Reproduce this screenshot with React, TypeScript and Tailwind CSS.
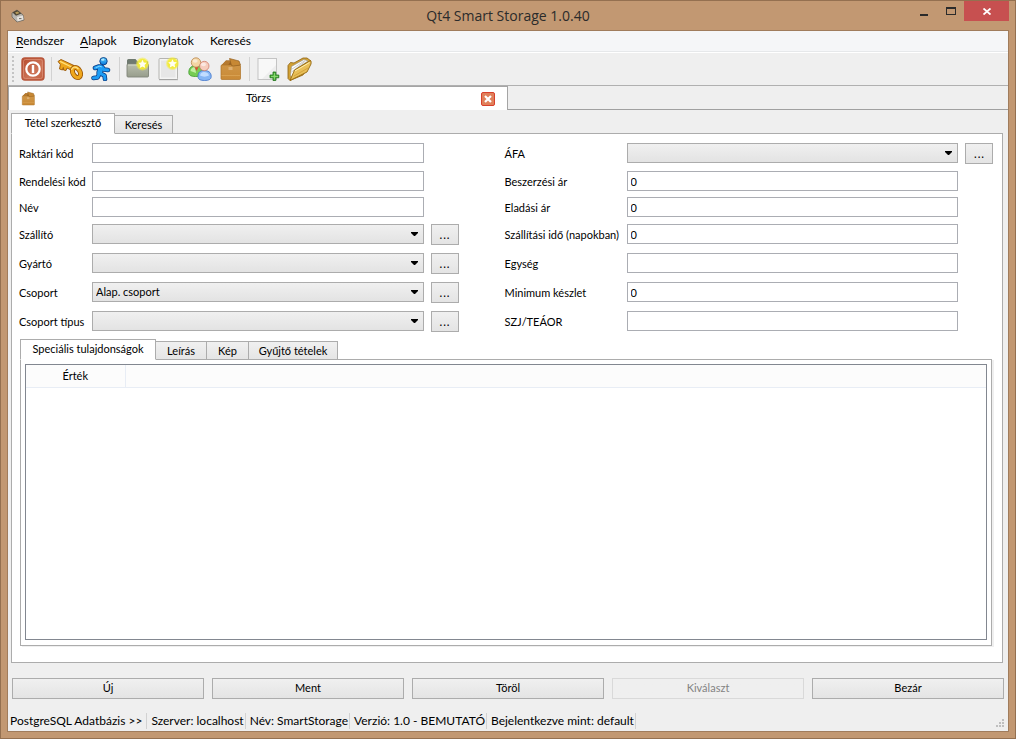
import React, { useState } from "react";

const menuItems = [
  { label: "Rendszer", underline: true },
  { label: "Alapok", underline: true },
  { label: "Bizonylatok", underline: false },
  { label: "Keresés", underline: false },
];

const statusItems = [
  "PostgreSQL Adatbázis >>",
  "Szerver: localhost",
  "Név: SmartStorage",
  "Verzió: 1.0 - BEMUTATÓ",
  "Bejelentkezve mint: default",
];

const AppIcon = () => (
  <svg width="14" height="14" viewBox="0 0 14 14">
    <path d="M1 4 L6 1 L12 6 L13 11 L6 13 L1 8Z" fill="#b9b6b0" stroke="#6b6760" strokeWidth="0.8" />
    <path d="M1.500 3.500 L6 1 L10.500 4.500 L5 6.800Z" fill="#4f4636" />
    <path d="M4 3.500 L6.5 2.5 L8.5 4 L5.5 5.3Z" fill="#b59a5a" />
    <path d="M6 8 L12 6.5 L12.5 10.5 L6.5 12.5Z" fill="#e4e2de" />
    <path d="M8 9.6h2.5" stroke="#6b6760" />
  </svg>
);

const PowerIcon = () => (
  <svg width="24" height="24" viewBox="0 0 24 24">
    <defs>
      <linearGradient id="power" x1="0" y1="0" x2="1" y2="1">
        <stop offset="0" stopColor="#b64a2d" />
        <stop offset="0.6" stopColor="#cd7457" />
        <stop offset="1" stopColor="#c05e40" />
      </linearGradient>
    </defs>
    <rect x="1" y="1" width="22" height="22" rx="3" fill="url(#power)" stroke="#b8553a" strokeWidth="1.4" />
    <rect x="2.5" y="2.5" width="19" height="19" rx="2" fill="none" stroke="#d98d73" strokeWidth="0.8" />
    <circle cx="12" cy="12" r="6.700" fill="none" stroke="#fff" strokeWidth="2.200" />
    <path d="M12 8v8" stroke="#fff" strokeWidth="2.4" />
  </svg>
);

const KeyIcon = () => (
  <svg width="26" height="24" viewBox="0 0 26 24">
    <path
      d="M1 4.500 L4 2.500 L17 8.500 L15 13.500 L10 11 L9 13.500 L6.500 13 L6.300 10.500 L5.500 13 L2.500 12 L3.400 7.500Z"
      fill="#eda51c"
      stroke="#9a5708"
      strokeWidth="0.9"
    />
    <path d="M3 4.300 L15.500 10.500" stroke="#ffe07a" strokeWidth="1.300" />
    <ellipse cx="19.500" cy="15.500" rx="3.600" ry="5.400" transform="rotate(-28 19.5 15.5)" fill="none" stroke="#9a5708" strokeWidth="5" />
    <ellipse cx="19.500" cy="15.500" rx="3.600" ry="5.400" transform="rotate(-28 19.5 15.5)" fill="none" stroke="#efa71d" strokeWidth="3.400" />
    <path d="M14.500 13c.5-3 4.500-4 7-.8" fill="none" stroke="#ffe58a" strokeWidth="1.200" />
  </svg>
);

const RunnerIcon = () => (
  <svg width="20" height="24" viewBox="0 0 20 24">
    <defs>
      <linearGradient id="runner" x1="0" y1="0" x2="0" y2="1">
        <stop offset="0" stopColor="#5fd0ff" />
        <stop offset="1" stopColor="#0877dc" />
      </linearGradient>
    </defs>
    <g fill="none" strokeLinecap="round" strokeLinejoin="round">
      <path d="M4 11 L8 9.500 L11 10 L13 12.500 L17 13 M9.500 11 L8.500 16 L13.500 18.500 L14 22 M8.500 16.500 L6.500 20.500 L2.500 21" stroke="#0a3a80" strokeWidth="4.600" />
      <path d="M9.800 11 L8.700 15.500" stroke="#0a3a80" strokeWidth="6.600" />
      <path d="M9.800 11 L8.700 15.500" stroke="#22a2f7" strokeWidth="5" />
      <path d="M4 11 L8 9.500 L11 10 L13 12.500 L17 13 M9.500 11 L8.500 16 L13.500 18.500 L14 22 M8.500 16.500 L6.500 20.500 L2.500 21" stroke="#1d9cf5" strokeWidth="3" />
      <path d="M5 10.500 L8.500 9.300 L10.500 9.800" stroke="#8bdcff" strokeWidth="1" />
    </g>
    <circle cx="12.500" cy="4.200" r="3.700" fill="url(#runner)" stroke="#0a3a80" strokeWidth="0.9" />
    <ellipse cx="11.800" cy="2.800" rx="1.700" ry="1" fill="#b4e8ff" />
  </svg>
);

const StarGlow = ({ cx, cy }: { cx: number; cy: number }) => (
  <g transform={`translate(${cx} ${cy})`}>
    <circle r="6.500" fill="#f5ee3c" opacity="0.500" />
    <circle r="5.300" fill="#f4ec2e" opacity="0.850" />
    <path d="M0-4.300 L1.300-1.500 L4.300-1.200 L2.100.9 L2.700 3.900 L0 2.400 L-2.700 3.900 L-2.100.9 L-4.300-1.200 L-1.300-1.500Z" fill="#fffef0" />
  </g>
);

const FolderNewIcon = () => (
  <svg width="24" height="24" viewBox="0 0 24 24">
    <defs>
      <linearGradient id="folder" x1="0" y1="0" x2="0" y2="1">
        <stop offset="0" stopColor="#b9beae" />
        <stop offset="1" stopColor="#979d8c" />
      </linearGradient>
    </defs>
    <path d="M1 19V3.500q0-1.500 1.500-1.500h7l2 2.500h10.500v14.500z" fill="#6f7a70" />
    <rect x="1" y="7" width="21.500" height="13" rx="1" fill="url(#folder)" stroke="#7f8578" strokeWidth="0.9" />
    <path d="M2 8h19.500" stroke="#d5d9ca" />
    <StarGlow cx={16.500} cy={7} />
  </svg>
);

const DocNewIcon = () => (
  <svg width="22" height="24" viewBox="0 0 22 24">
    <rect x="1" y="1.500" width="18.500" height="21" rx="1" fill="#f4f4f3" stroke="#b4b4b1" />
    <path d="M3 3.500h14.500v17h-14.500z" fill="#e6e6e6" />
    <path d="M1 22.700h19" stroke="#999" strokeWidth="0.800" />
    <StarGlow cx={14.500} cy={6.500} />
  </svg>
);

const UsersIcon = () => (
  <svg width="24" height="24" viewBox="0 0 24 24">
    <path d="M.8 15.500C.8 10.500 4 8.500 8 8.500s6.500 2.500 6.500 6-2 5-7 5-6.700-1.500-6.700-4z" fill="#76cc55" stroke="#3d9a2b" strokeWidth="0.800" />
    <path d="M2.500 14c.5-3 2.500-4 4.500-4l1 6z" fill="#c2f0a3" />
    <path d="M6.500 10h4l-2 4z" fill="#d94b32" />
    <circle cx="8" cy="5.500" r="4.700" fill="#f3d5a4" stroke="#b98850" strokeWidth="0.800" />
    <ellipse cx="7.200" cy="4" rx="2.500" ry="1.800" fill="#fff" opacity="0.500" />
    <path d="M10 19.500c0-4.500 2.500-6 6.200-6s7 1.500 7 6c0 3-2.800 4-6.700 4s-6.500-1-6.500-4z" fill="#86b6f4" stroke="#3e72c9" strokeWidth="0.800" />
    <path d="M12 18.500c.5-3 2-3.500 4-3.500s4.500.8 5 3.500c-3 1.500-6 1.500-9 0z" fill="#c1ddff" />
    <circle cx="16.300" cy="9" r="4.700" fill="#f6cdbd" stroke="#cf7e6b" strokeWidth="0.800" />
    <ellipse cx="15.500" cy="7.500" rx="2.500" ry="1.800" fill="#fff" opacity="0.550" />
  </svg>
);

const BoxIcon = ({ size }: { size: number }) => (
  <svg width={size} height={size} viewBox="0 0 24 24">
    <defs>
      <linearGradient id="box" x1="0" y1="0" x2="0" y2="1">
        <stop offset="0" stopColor="#cf9546" />
        <stop offset="1" stopColor="#c98a36" />
      </linearGradient>
    </defs>
    <path d="M2.500 8.500 L7 3.500 L18 4 L21 8.500z" fill="#9a6223" />
    <path d="M2 8.500 L7 3.500 L12 3.500 L9 8.500z" fill="#b67a30" />
    <rect x="2" y="8" width="19.500" height="14.500" rx="1" fill="url(#box)" stroke="#ad7327" strokeWidth="0.700" />
    <path d="M12.500 8.500 L10.500 1.500 L20 4 L21.500 8 L14.500 9z" fill="#c78834" stroke="#94601f" strokeWidth="0.700" />
    <path d="M9.500 10h4v3h-4z" fill="#dfb072" />
    <path d="M2.500 18.500h18.500" stroke="#dba556" strokeWidth="0.800" />
  </svg>
);

const DocAddIcon = () => (
  <svg width="23" height="24" viewBox="0 0 23 24">
    <rect x="1" y="1.500" width="18.500" height="21" fill="#f8f8f8" stroke="#c4c4c4" />
    <path d="M5 22 L19 8 V22z" fill="#eee" />
    <path d="M16 15h2.800v3h3v2.800h-3v2.700h-2.800v-2.700h-3v-2.800h3z" fill="#4cae3c" stroke="#20731a" strokeWidth="0.800" />
    <path d="M17.400 16v6.500M14 19.400h7" stroke="#8edb74" />
  </svg>
);

const FolderOpenIcon = () => (
  <svg width="25" height="24" viewBox="0 0 25 24">
    <path d="M1 21.500 V8.500 L3.500 5.500 L7 6 L16 1 L20 1 L24 4 L16 18 L3 23.500z" fill="#d2a236" stroke="#8d6110" strokeWidth="0.800" />
    <path d="M3.500 18 L4.500 9.500 L17 2.500 L21 4 L9 12 L4.500 21z" fill="#fff" stroke="#8f8f88" strokeWidth="0.600" />
    <path d="M4.500 15 L18.500 4 M4.300 12.500 L18 3.500" stroke="#bdbdb8" strokeWidth="0.800" />
    <path d="M3 23.500 L7.500 13 L23.500 3.500 Q24.500 5 24 7 L20 15z" fill="#e8bf58" stroke="#94680f" strokeWidth="0.900" />
    <path d="M8 14 L22.500 5.500" stroke="#fff0ae" />
    <path d="M7 19 L21 11" stroke="#d4a43c" />
  </svg>
);

const Separator = () => <span className="mx-0.5 h-6 w-px bg-[#d2d2d2]" />;

const ToolButton = ({ label, children }: { label: string; children: React.ReactNode }) => (
  <button aria-label={label} className="flex h-7 w-[30px] items-center justify-center">
    {children}
  </button>
);

const TextField = ({ id, value = "" }: { id: string; value?: string }) => (
  <input
    id={id}
    type="text"
    defaultValue={value}
    className="h-5 w-full min-w-0 border border-[#abadb3] bg-white px-[3px] outline-none"
  />
);

const Combo = ({ id, value = "" }: { id: string; value?: string }) => (
  <div className="relative h-5 min-w-0">
    <select
      id={id}
      className="block h-5 w-full appearance-none border border-[#acacac] bg-linear-to-b from-[#f0f0f0] to-[#e3e3e3] px-[3px] outline-none"
    >
      <option>{value}</option>
    </select>
    <svg className="pointer-events-none absolute right-1.5 top-2" width="7" height="4" viewBox="0 0 7 4">
      <path d="M0 0h7v1L4 4H3L0 1z" fill="#000" />
    </svg>
  </div>
);

const MoreButton = ({ label }: { label: string }) => (
  <button
    aria-label={label}
    className="ml-[7px] h-[21px] w-7 border border-[#acacac] bg-linear-to-b from-[#f0f0f0] to-[#e4e4e4] font-['DejaVu_Sans_Condensed',sans-serif] text-[13px] leading-4"
  >
    ...
  </button>
);

type Field = { id: string; label: string; kind: "text" | "combo"; value?: string; more?: boolean };

// left and right fields of each form row
const rows: [Field, Field][] = [
  [
    { id: "raktari", label: "Raktári kód", kind: "text" },
    { id: "afa", label: "ÁFA", kind: "combo", more: true },
  ],
  [
    { id: "rendelesi", label: "Rendelési kód", kind: "text" },
    { id: "beszerzesi", label: "Beszerzési ár", kind: "text", value: "0" },
  ],
  [
    { id: "nev", label: "Név", kind: "text" },
    { id: "eladasi", label: "Eladási ár", kind: "text", value: "0" },
  ],
  [
    { id: "szallito", label: "Szállító", kind: "combo", more: true },
    { id: "szallitasi", label: "Szállítási idő (napokban)", kind: "text", value: "0" },
  ],
  [
    { id: "gyarto", label: "Gyártó", kind: "combo", more: true },
    { id: "egyseg", label: "Egység", kind: "text" },
  ],
  [
    { id: "csoport", label: "Csoport", kind: "combo", value: "Alap. csoport", more: true },
    { id: "minimum", label: "Minimum készlet", kind: "text", value: "0" },
  ],
  [
    { id: "tipus", label: "Csoport típus", kind: "combo", more: true },
    { id: "szj", label: "SZJ/TEÁOR", kind: "text" },
  ],
];

const FormField = ({ field }: { field: Field }) => (
  <>
    <label htmlFor={field.id} className="whitespace-nowrap leading-[22px]">
      {field.label}
    </label>
    {field.kind === "combo" ? (
      <Combo id={field.id} value={field.value} />
    ) : (
      <TextField id={field.id} value={field.value} />
    )}
    <div>{field.more && <MoreButton label={`${field.label} lista`} />}</div>
  </>
);

const Tabs = ({
  items,
  active,
  onSelect,
}: {
  items: { label: string; width: string }[];
  active: number;
  onSelect: (index: number) => void;
}) => (
  <div role="tablist" className="relative -mb-px flex items-end">
    {items.map((item, index) => (
      <button
        key={item.label}
        role="tab"
        aria-selected={index === active}
        onClick={() => onSelect(index)}
        className={`border border-[#acacac] whitespace-nowrap ${item.width} ${index > 0 ? "-ml-px" : ""} ${
          index === active
            ? "z-10 h-[21px] border-b-white bg-white"
            : "h-[19px] bg-linear-to-b from-[#f0f0f0] to-[#e5e5e5] pt-px"
        }`}
      >
        {item.label}
      </button>
    ))}
  </div>
);

const ActionButton = ({ label, disabled = false }: { label: string; disabled?: boolean }) => (
  <button
    disabled={disabled}
    className="h-[21px] flex-1 border border-[#acacac] bg-linear-to-b from-[#f0f0f0] to-[#e4e4e4] disabled:border-[#d9d9d9] disabled:from-[#efefef] disabled:to-[#efefef] disabled:text-[#838383]"
  >
    {label}
  </button>
);

const App = () => {
  const [mainTab, setMainTab] = useState(0);
  const [detailTab, setDetailTab] = useState(0);

  return (
    <div className="flex min-h-screen flex-col border border-[#947050] bg-[#c29872] px-1.5 pb-1.5 font-['Lato',sans-serif] text-[11px] text-black">
      {/* Title bar */}
      <header className="grid h-[29px] grid-cols-[1fr_auto_1fr] items-start">
        <div className="pl-1 pt-2">
          <AppIcon />
        </div>
        <h1 className="font-['Open_Sans',sans-serif] text-[14px] leading-[29px] text-[#2b2b2b]">Qt4 Smart Storage 1.0.40</h1>
        <div className="flex justify-end">
          <button aria-label="Kis méret" className="flex h-5 w-[27px] items-center justify-center">
            <svg width="8" height="10" viewBox="0 0 8 10">
              <path d="M0 8h8v2H0z" fill="#2b2b2b" />
            </svg>
          </button>
          <button aria-label="Teljes méret" className="flex h-5 w-[27px] items-center justify-center">
            <svg width="10" height="8" viewBox="0 0 10 8">
              <path fillRule="evenodd" d="M0 0h10v8H0zM1 2v5h8V2z" fill="#2b2b2b" />
            </svg>
          </button>
          <button aria-label="Ablak bezárása" className="flex h-5 w-[45px] items-center justify-center bg-[#c75050]">
            <svg width="8" height="7" viewBox="0 0 8 7">
              <path d="M.5.5l7 6M7.500.5l-7 6" stroke="#fff" strokeWidth="1.800" />
            </svg>
          </button>
        </div>
      </header>

      <div className="flex grow flex-col border border-[#a07c5c] bg-[#efefef]">
        <nav className="flex h-[22px] items-start gap-4 border-b border-white bg-[#f5f6f8] px-2 text-xs shadow-[inset_0_-1px_0_#e6e8ea]">
          {menuItems.map((item) => (
            <button key={item.label} className="leading-5">
              {item.underline ? (
                <>
                  <span className="underline underline-offset-2">{item.label[0]}</span>
                  {item.label.slice(1)}
                </>
              ) : (
                item.label
              )}
            </button>
          ))}
        </nav>

        {/* Toolbar */}
        <div className="flex h-[33px] items-center border-b border-[#b0b0b0] pl-1">
          <svg width="3" height="26" viewBox="0 0 3 26">
            <path d="M1 0v26" stroke="#c4c4c4" strokeWidth="2" strokeDasharray="2 2" />
          </svg>
          <div className="flex items-center gap-px pl-[3px]">
            <ToolButton label="Kilépés">
              <PowerIcon />
            </ToolButton>
            <Separator />
            <ToolButton label="Belépés">
              <KeyIcon />
            </ToolButton>
            <ToolButton label="Kijelentkezés">
              <RunnerIcon />
            </ToolButton>
            <Separator />
            <ToolButton label="Új csoport">
              <FolderNewIcon />
            </ToolButton>
            <ToolButton label="Új lap">
              <DocNewIcon />
            </ToolButton>
            <ToolButton label="Partnerek">
              <UsersIcon />
            </ToolButton>
            <ToolButton label="Raktár">
              <BoxIcon size={24} />
            </ToolButton>
            <Separator />
            <ToolButton label="Új bizonylat">
              <DocAddIcon />
            </ToolButton>
            <ToolButton label="Megnyitás">
              <FolderOpenIcon />
            </ToolButton>
          </div>
        </div>

        {/* Document tab */}
        <div className="grid h-6 grid-cols-2">
          <div className="flex items-center border-x border-t border-[#a5a5a5] bg-white px-3">
            <BoxIcon size={15} />
            <span className="grow text-center">Törzs</span>
            <button aria-label="Lap bezárása">
              <svg width="14" height="14" viewBox="0 0 14 14">
                <rect x="0.500" y="0.500" width="13" height="13" rx="1.500" fill="#e0805a" stroke="#d8402c" />
                <path d="M4 4l6 6M10 4l-6 6" stroke="#fff" strokeWidth="2.200" />
              </svg>
            </button>
          </div>
          <div className="border-b border-[#a0a0a0]" />
        </div>

        <main className="flex grow flex-col pl-[3px] pr-[5px] pt-[3px]">
          <Tabs
            items={[
              { label: "Tétel szerkesztő", width: "w-[104px]" },
              { label: "Keresés", width: "w-[59px]" },
            ]}
            active={mainTab}
            onSelect={setMainTab}
          />
          <section className="flex grow flex-col border border-[#acacac] bg-white pb-4 pl-2 pr-[10px] pt-[9px]">
            <form className="-mx-px grid grid-cols-[73px_1fr_81px_122px_1fr_35px] grid-rows-[22px_20px_21px_repeat(4,23px)] gap-y-1.5">
              {rows.map(([left, right]) => (
                <React.Fragment key={left.id}>
                  <FormField field={left} />
                  <FormField field={right} />
                </React.Fragment>
              ))}
            </form>

            <div className="mt-[5px] flex grow flex-col">
              <Tabs
                items={[
                  { label: "Speciális tulajdonságok", width: "w-[136px]" },
                  { label: "Leírás", width: "w-[52px]" },
                  { label: "Kép", width: "w-[43px]" },
                  { label: "Gyűjtő tételek", width: "w-[90px]" },
                ]}
                active={detailTab}
                onSelect={setDetailTab}
              />
              <div className="flex grow flex-col border border-[#acacac] bg-white px-1 pb-[5px] pt-1 shadow-[2px_1px_0_#efefef]">
                <div className="grow border border-[#828790]">
                  <table className="w-full table-fixed">
                    <thead>
                      <tr className="h-[22px] border-b border-[#e8edf5] bg-[#fcfcfc]">
                        <th className="w-[99px] border-r border-[#e8edf5] font-normal">Érték</th>
                        <td />
                      </tr>
                    </thead>
                  </table>
                </div>
              </div>
            </div>
          </section>
        </main>

        <div className="mt-[15px] flex gap-2 px-1">
          <ActionButton label="Új" />
          <ActionButton label="Ment" />
          <ActionButton label="Töröl" />
          <ActionButton label="Kiválaszt" disabled />
          <ActionButton label="Bezár" />
        </div>

        <footer className="mt-3.5 flex h-[18px] items-start text-xs">
          {statusItems.map((item) => (
            <span key={item} className="border-r border-[#d2d2d2] pl-1 pr-px leading-4 first:pl-0.5 first:pr-1">
              {item}
            </span>
          ))}
          <svg className="mb-1 ml-auto mr-1 self-end" width="8" height="8" viewBox="0 0 8 8">
            <path d="M6 0h2v2H6zM3 3h2v2H3zM6 3h2v2H6zM0 6h2v2H0zM3 6h2v2H3zM6 6h2v2H6z" fill="#bfbfbf" />
          </svg>
        </footer>
      </div>
    </div>
  );
};

export default App;
